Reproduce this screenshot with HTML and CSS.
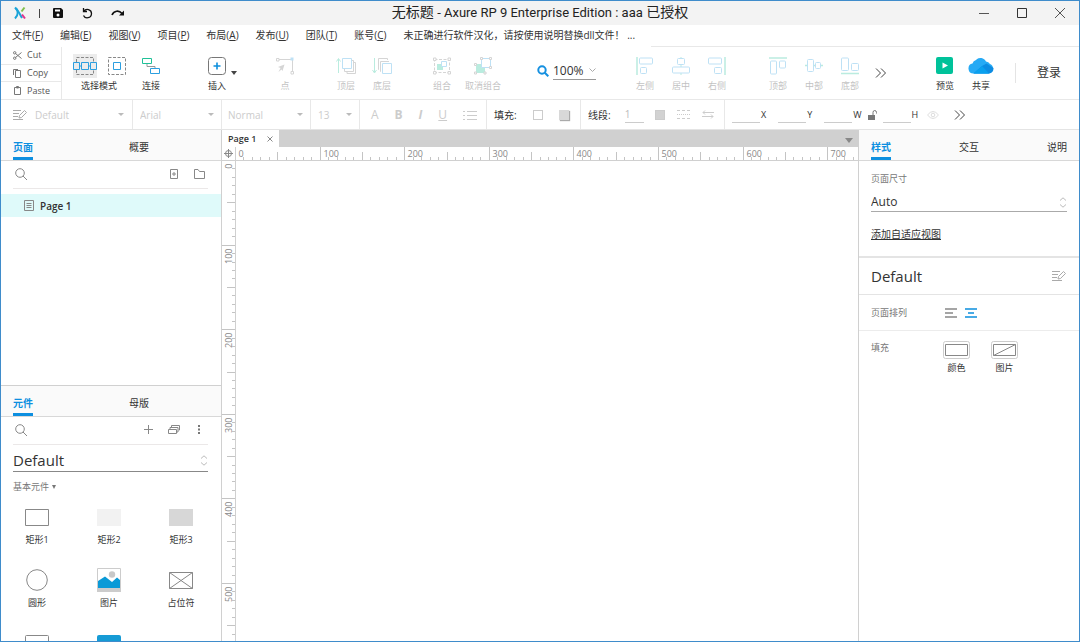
FILE: index.html
```html
<!DOCTYPE html>
<html lang="zh-CN">
<head>
<meta charset="utf-8">
<title>无标题 - Axure RP 9 Enterprise Edition</title>
<link rel="stylesheet" href="styles.css">
</head>
<body>
<div class="app">
  <header class="titlebar">
    <div class="quick">
      <svg class="logo" width="14" height="14" viewBox="0 0 14 14" fill="none" stroke-width="2"><path d="M2 1.500C5.500 5 5.500 9 2 12.500" stroke="#1ba4d8"/><path d="M3 2C6.500 7 7.500 9 9 12" stroke="#1ba4d8"/><path d="M8.500 5.500L11.500 1.500" stroke="#7fbf4b"/><path d="M9 8.500L12 12.500" stroke="#e0318c"/></svg>
      <span class="quick-line"></span>
      <button class="icon-btn" aria-label="保存"><svg width="10" height="10" viewBox="0 0 10 10"><path d="M1 0H8L10 2V9Q10 10 9 10H1Q0 10 0 9V1Q0 0 1 0Z" fill="#111"/><path d="M2 1.500H7V3.500H2Z" fill="#fff"/><circle cx="5" cy="7" r="1.500" fill="#fff"/></svg></button>
      <button class="icon-btn" aria-label="撤销"><svg width="12" height="12" viewBox="0 0 12 12" fill="none" stroke="#111" stroke-width="1.300"><path d="M2.500 1V4.500H6M2.700 4.300C5 1 10.500 2.300 10.500 6.500C10.500 11.500 4 12 2.500 8.500"/></svg></button>
      <button class="icon-btn" aria-label="重做"><svg width="14" height="12" viewBox="0 0 14 12"><path d="M1 8C3 3.500 8 3 11 6.500" fill="none" stroke="#111" stroke-width="1.700"/><path d="M13 3.500V8.500H8Z" fill="#111"/></svg></button>
    </div>
    <h1 class="title">无标题 <span class="product">- Axure RP 9 Enterprise Edition : aaa</span> 已授权</h1>
    <div class="window-btns">
      <button class="icon-btn" aria-label="最小化"><svg width="10" height="10"><path d="M0 5.500H10" stroke="#555"/></svg></button>
      <button class="icon-btn" aria-label="最大化"><svg width="10" height="10"><path d="M.5.500H9.500V9.500H.5Z" fill="none" stroke="#333"/></svg></button>
      <button class="icon-btn" aria-label="关闭"><svg width="10" height="10"><path d="M0 0L10 10M10 0L0 10" stroke="#555"/></svg></button>
    </div>
  </header>

  <nav class="menubar">
    <div class="menus">
      <button>文件(<u>F</u>)</button><button>编辑(<u>E</u>)</button><button>视图(<u>V</u>)</button><button>项目(<u>P</u>)</button><button>布局(<u>A</u>)</button><button>发布(<u>U</u>)</button><button>团队(<u>T</u>)</button><button>账号(<u>C</u>)</button><button>未正确进行软件汉化，请按使用说明替换dll文件！ ...</button>
    </div>
    <div class="menu-rest"></div>
  </nav>

  <div class="toolbar">
    <div class="clipboard">
      <button><svg width="9" height="9" viewBox="0 0 9 9" fill="none" stroke="#777"><path d="M2.500 2.500L8.500 7.500M2.500 6.500L8.500 1.500"/><circle cx="1.700" cy="1.800" r="1.200"/><circle cx="1.700" cy="7.200" r="1.200"/></svg>Cut</button>
      <button><svg width="9" height="9" viewBox="0 0 9 9" fill="none" stroke="#777"><path d="M2.500 1.500H7.500V8.500H2.500ZM.5 6V.5H5"/></svg>Copy</button>
      <button><svg width="9" height="9" viewBox="0 0 9 9" fill="none" stroke="#777"><path d="M1.500 1.500H7.500V8.500H1.500ZM3.500.500H5.500V2H3.500Z"/></svg>Paste</button>
    </div>
    <div class="tool select-mode">
      <div class="mode-icons">
        <button class="mode active" aria-label="相交选择"><svg width="24" height="24" viewBox="0 0 24 24" fill="none"><path d="M3.500 8V3.500H20.500V8M3.500 16V20.500H20.500V16" stroke="#888" stroke-dasharray="3 1.500"/><path d="M.5 8.500H6.500V15.500H.5ZM8.500 8.500H15.500V15.500H8.500ZM17.500 8.500H23.500V15.500H17.500ZM6.500 12H8.500M15.500 12H17.500" stroke="#2c9fe0"/></svg></button>
        <button class="mode" aria-label="包含选择"><svg width="18" height="24" viewBox="0 0 18 24" fill="none"><path d="M.5 3.500H17.500V20.500H.5Z" stroke="#888" stroke-dasharray="3 1.500"/><path d="M5.500 8.500H12.500V15.500H5.500Z" stroke="#2c9fe0"/></svg></button>
      </div>
      <span>选择模式</span>
    </div>
    <button class="tool connect"><svg width="18" height="24" viewBox="0 0 18 24" fill="none"><path d="M.5 4.500H9.500V9.500H.5Z" stroke="#1fc198"/><path d="M8.500 14.500H17.500V19.500H8.500Z" stroke="#2c9fe0"/><path d="M5 10V12.500H13V14" stroke="#999"/></svg><span>连接</span></button>
    <button class="tool insert"><svg width="18" height="24" viewBox="0 0 18 24" fill="none"><rect x=".5" y="3.500" width="17" height="17" rx="3" stroke="#777"/><path d="M5.500 12H12.500M9 8.500V15.500" stroke="#0d8fdd" stroke-width="1.600"/></svg><span>插入</span></button>
    <button class="caret-btn" aria-label="插入更多"><svg width="6" height="4"><path d="M0 0H6L3 4Z" fill="#444"/></svg></button>
    <button class="tool point off"><svg width="18" height="24" viewBox="0 0 18 24" fill="none"><path d="M3 5.500H16.500V17" stroke="#777"/><path d="M.5 4.500H3V7H.5ZM15 17.500H17.500V20H15Z" stroke="#777"/><path d="M14.500 3.500H17.500V6.500H14.500Z" fill="#2c9fe0"/><path d="M8.500 10.500L2 13L4.500 14L2.500 18L5.500 15.500L6.500 17Z" fill="#777"/></svg><span>点</span></button>
    <button class="tool front off"><svg width="20" height="24" viewBox="0 0 20 24" fill="none"><path d="M2.500 19V5M.5 7.500L2.500 4.500L4.500 7.500" stroke="#1fc198"/><path d="M16 6.500H17.500V17.500H8.500V15M18 8.500H19.500V19.500H11V18" stroke="#777"/><path d="M6.500 4.500H15.500V14.500H6.500Z" stroke="#2c9fe0"/></svg><span>顶层</span></button>
    <button class="tool off"><svg width="20" height="24" viewBox="0 0 20 24" fill="none"><path d="M2.500 4V18.500M.5 16L2.500 19L4.500 16" stroke="#1fc198"/><path d="M7 15.500H6.500V4.500H15.500V6M9 17.500H8.500V7.500H17" stroke="#777"/><path d="M10.500 9.500H19.500V19.500H10.500Z" stroke="#2c9fe0"/></svg><span>底层</span></button>
    <button class="tool group off"><svg width="18" height="24" viewBox="0 0 18 24" fill="none"><path d="M1.500 5.500H16.500V18.500H1.500Z" stroke="#777" stroke-dasharray="3 1.500"/><path d="M.5 4H3V6.500H.5ZM15 4H17.500V6.500H15ZM.5 17.500H3V20H.5ZM15 17.500H17.500V20H15Z" stroke="#777" fill="#fff"/><path d="M4 10H10V16H4Z" fill="#1fc198"/><path d="M8.500 7.500H13.500V12.500H8.500Z" stroke="#2c9fe0" fill="#fff"/></svg><span>组合</span></button>
    <button class="tool ungroup off"><svg width="18" height="24" viewBox="0 0 18 24" fill="none"><path d="M2 10H11V19H2Z" fill="#1fc198"/><path d="M7.500 4.500H16.500V13.500H7.500Z" stroke="#2c9fe0" fill="#fff"/><path d="M6.500 3.500H8.500V5.500H6.500ZM15.500 3.500H17.500V5.500H15.500ZM15.500 12.500H17.500V14.500H15.500ZM.5 9.500H2.500V11.500H.5ZM.5 18H2.500V20H.5ZM10 18H12V20H10Z" stroke="#777" fill="#fff"/></svg><span>取消组合</span></button>
    <div class="zoom">
      <svg width="12" height="12" viewBox="0 0 12 12" fill="none" stroke="#1590e0" stroke-width="2"><circle cx="5" cy="5" r="3.700"/><path d="M7.800 7.800L11.300 11.300"/></svg>
      <div class="zoom-field"><input value="100%" aria-label="缩放"><svg width="7" height="5" fill="none" stroke="#aaa"><path d="M.5.500L3.500 3.500L6.500.500"/></svg></div>
    </div>
    <button class="tool align-l off"><svg width="18" height="24" viewBox="0 0 18 24" fill="none"><path d="M1 3V21" stroke="#1fc198" stroke-width="1.500"/><rect x="3.500" y="4" width="13" height="6" rx="1" stroke="#2c9fe0"/><rect x="4.500" y="13.500" width="6" height="6" rx="1" stroke="#2c9fe0"/></svg><span>左侧</span></button>
    <button class="tool off"><svg width="18" height="24" viewBox="0 0 18 24" fill="none"><path d="M9 3V5M9 10V13M9 19V21" stroke="#1fc198"/><rect x="5.500" y="4.500" width="7" height="6" rx="1" stroke="#2c9fe0"/><rect x=".5" y="13" width="17" height="6" rx="1" stroke="#2c9fe0"/></svg><span>居中</span></button>
    <button class="tool off"><svg width="18" height="24" viewBox="0 0 18 24" fill="none"><path d="M17 3V21" stroke="#1fc198" stroke-width="1.500"/><rect x=".5" y="4" width="13" height="6" rx="1" stroke="#2c9fe0"/><rect x="6.500" y="13.500" width="7" height="6" rx="1" stroke="#2c9fe0"/></svg><span>右侧</span></button>
    <button class="tool front off"><svg width="18" height="24" viewBox="0 0 18 24" fill="none"><path d="M0 4H18" stroke="#1fc198" stroke-width="1.500"/><rect x="1.500" y="7" width="6" height="13" rx="1" stroke="#2c9fe0"/><rect x="10.500" y="7" width="6" height="7" rx="1" stroke="#2c9fe0"/></svg><span>顶部</span></button>
    <button class="tool off"><svg width="18" height="24" viewBox="0 0 18 24" fill="none"><path d="M0 11.500H2M9 11.500H10M16 11.500H18" stroke="#1fc198" stroke-width="1.500"/><rect x="2.500" y="5.500" width="6" height="12" rx="1" stroke="#2c9fe0"/><rect x="10.500" y="8.500" width="5" height="6" rx="1" stroke="#2c9fe0"/></svg><span>中部</span></button>
    <button class="tool off"><svg width="18" height="24" viewBox="0 0 18 24" fill="none"><path d="M0 19.500H18" stroke="#1fc198" stroke-width="1.500"/><rect x=".5" y="4" width="7" height="12.500" rx="1" stroke="#2c9fe0"/><rect x="10.500" y="9.500" width="7" height="7" rx="1" stroke="#2c9fe0"/></svg><span>底部</span></button>
    <button class="more" aria-label="更多工具"><svg width="11" height="10" fill="none" stroke="#444"><path d="M1 .5L5.500 5L1 9.500M6 .5L10.500 5L6 9.500"/></svg></button>
    <button class="tool preview"><svg width="18" height="24" viewBox="0 0 18 24"><rect x="0" y="3" width="17" height="17" rx="2" fill="#00c29a"/><path d="M6.500 8.500L12 11.500L6.500 14.500Z" fill="#fff"/></svg><span>预览</span></button>
    <button class="tool"><svg width="26" height="24" viewBox="0 0 26 24"><path d="M5.500 19.500A5 5 0 0 1 4.500 9.600A5 5 0 0 1 8 6A6 6 0 0 1 18 7.500A6 6 0 0 1 22 10A5 5 0 0 1 21 19.500Z" fill="#26aaf5"/><path d="M5.500 19.500L14 12L18.500 9.500L25.500 14A5 5 0 0 1 21 19.500Z" fill="#0d8ce2"/><path d="M14 12L21 19.500H5.500Z" fill="#0aa0ee"/></svg><span>共享</span></button>
    <span class="divider"></span>
    <button class="login">登录</button>
  </div>

  <div class="formatbar">
    <div class="cell style-cell off-text"><svg width="14" height="12" viewBox="0 0 14 12" fill="none" stroke="#aaa"><path d="M0 1.500H8M0 4.500H6M0 7.500H5M0 10.500H10M6 9L6.500 6.500L11.500 1.500L13.500 3.500L8.500 8.500Z"/></svg><select aria-label="样式"><option>Default</option></select><svg class="tri" width="6" height="3"><path d="M0 0H6L3 3Z"/></svg></div>
    <div class="cell font-cell off-text"><select aria-label="字体"><option>Arial</option></select><svg class="tri" width="6" height="3"><path d="M0 0H6L3 3Z"/></svg></div>
    <div class="cell weight-cell off-text"><select aria-label="字重"><option>Normal</option></select><svg class="tri" width="6" height="3"><path d="M0 0H6L3 3Z"/></svg></div>
    <div class="cell size-cell off-text"><select aria-label="字号"><option>13</option></select><svg class="tri" width="6" height="3"><path d="M0 0H6L3 3Z"/></svg></div>
    <div class="cell text-cell off-text">
      <button>A</button><button><b>B</b></button><button><b><i>I</i></b></button><button><u>U</u></button><button aria-label="列表"><svg width="14" height="10" stroke="#ccc"><path d="M0 1.500H2M4 1.500H14M0 5.500H2M4 5.500H14M0 9.500H2M4 9.500H14"/></svg></button>
    </div>
    <div class="cell fill-cell"><span class="lbl">填充:</span><button class="swatch" aria-label="填充颜色"></button><button class="swatch shadow" aria-label="阴影"></button></div>
    <div class="cell line-cell"><span class="lbl">线段:</span><input value="1" aria-label="线宽"><button class="swatch solid" aria-label="线条颜色"></button><button aria-label="线型"><svg width="13" height="9" stroke="#ccc"><path d="M0 .5H13" stroke-dasharray="3 2"/><path d="M0 4.500H13" stroke-dasharray="1 1"/><path d="M0 8.500H13" stroke-dasharray="3 2"/></svg></button><button aria-label="箭头"><svg width="12" height="9" fill="none" stroke="#ccc"><path d="M12 2.500H1L3 .5M1 2.500L3 4.500M0 6.500H11L9 4.500M11 6.500L9 8.500"/></svg></button></div>
    <div class="cell pos-cell">
      <label><input>X</label><label><input>Y</label><label><input>W</label>
      <button class="lock" aria-label="锁定比例"><svg width="9" height="10" viewBox="0 0 9 10"><path d="M0 5H7V10H0Z" fill="#777"/><path d="M5 5V2.500Q5 .5 6.700.500T8.500 2.500V3.500" fill="none" stroke="#777"/></svg></button>
      <label><input>H</label>
      <button class="eye" aria-label="可见"><svg width="12" height="8" fill="none" stroke="#ddd"><path d="M.5 4Q6-3 11.500 4Q6 11 .5 4Z"/><circle cx="6" cy="4" r="1.800"/></svg></button>
      <button class="more2" aria-label="更多格式"><svg width="11" height="10" fill="none" stroke="#444"><path d="M1 .5L5.500 5L1 9.500M6 .5L10.500 5L6 9.500"/></svg></button>
    </div>
  </div>

  <main class="main">
    <aside class="left">
      <section class="panel">
        <div class="tabs"><button class="on">页面</button><button>概要</button></div>
        <div class="search"><svg width="12" height="12" fill="none" stroke="#888"><circle cx="5" cy="5" r="4.300"/><path d="M8 8L12 12"/></svg><input aria-label="搜索页面">
          <button aria-label="添加页面"><svg width="8" height="10" fill="none" stroke="#888"><path d="M.5.500H7.500V9.500H.5ZM2 5H6M4 3V7"/></svg></button>
          <button class="folder" aria-label="添加文件夹"><svg width="11" height="10" fill="none" stroke="#888"><path d="M.5.500H4L5.500 2.500H10.500V9.500H.5Z"/></svg></button>
        </div>
        <a class="page" href="#page1"><svg width="10" height="11" fill="none" stroke="#888"><path d="M.5.500H9.500V10.500H.5ZM2.500 3.500H7.500M2.500 5.500H7.500M2.500 7.500H7.500"/></svg>Page 1</a>
      </section>
      <section class="panel library">
        <div class="tabs"><button class="on">元件</button><button>母版</button></div>
        <div class="search"><svg width="12" height="12" fill="none" stroke="#888"><circle cx="5" cy="5" r="4.300"/><path d="M8 8L12 12"/></svg><input aria-label="搜索元件">
          <button aria-label="添加"><svg width="9" height="9" stroke="#888"><path d="M0 4.500H9M4.500 0V9"/></svg></button>
          <button class="stack" aria-label="元件库"><svg width="12" height="9" fill="none" stroke="#888"><path d="M.5 4.500H8.500V8.500H.5ZM2 4V2.500H10V7H9M3.500 2V.5H11.500V5H10.500"/></svg></button>
          <button class="dots" aria-label="选项"><svg width="3" height="9" fill="#777"><path d="M0 0H2V2H0ZM0 3.500H2V5.500H0ZM0 7H2V9H0Z"/></svg></button>
        </div>
        <div class="pick"><select aria-label="元件库选择"><option>Default</option></select><svg width="8" height="11" fill="none" stroke="#bbb"><path d="M1 3.500L4 .8L7 3.500M1 7.500L4 10.200L7 7.500"/></svg></div>
        <button class="category">基本元件 <svg width="4" height="4"><path d="M0 0H4L2 4Z" fill="#777"/></svg></button>
        <div class="widgets">
          <button><svg width="26" height="26" fill="none" stroke="#888"><path d="M1.500 5.500H24.500V21.500H1.500Z"/></svg>矩形1</button>
          <button><svg width="26" height="26"><path d="M1 5H25V22H1Z" fill="#f2f2f2"/></svg>矩形2</button>
          <button><svg width="26" height="26"><path d="M1 5H25V22H1Z" fill="#d7d7d7"/></svg>矩形3</button>
          <button><svg width="26" height="26" fill="none" stroke="#888"><circle cx="13" cy="13" r="10.300"/></svg>圆形</button>
          <button><svg width="26" height="26"><path d="M1.500 1.500H24.500V24.500H1.500Z" fill="#fff" stroke="#ccc"/><circle cx="16" cy="7.500" r="3.200" fill="#c8c8c8"/><path d="M2 14L9 9.500L16 15L21 10.500L24 13V21H2Z" fill="#0a9ad7"/><path d="M1 21H25V25H1Z" fill="#ccc"/></svg>图片</button>
          <button><svg width="26" height="26" fill="none" stroke="#888"><path d="M1.500 5.500H24.500V21.500H1.500ZM1.500 5.500L24.500 21.500M24.500 5.500L1.500 21.500"/></svg>占位符</button>
          <button aria-label="按钮"><svg width="26" height="26" fill="none" stroke="#888"><rect x="1.500" y="5.500" width="23" height="16" rx="1"/></svg></button>
          <button aria-label="主要按钮"><svg width="26" height="26"><rect x="1" y="5" width="24" height="17" rx="2" fill="#169bd5"/></svg></button>
        </div>
      </section>
    </aside>

    <section class="center">
      <div class="doc-tabs"><div class="doc-tab"><span>Page 1</span><button aria-label="关闭页面"><svg width="6" height="6" stroke="#888"><path d="M.5.500L5.500 5.500M5.500.500L.5 5.500"/></svg></button></div><button class="doc-menu" aria-label="页面列表"><svg width="8" height="5"><path d="M0 0H8L4 5Z" fill="#888"/></svg></button></div>
      <div class="rulers">
        <div class="corner"><svg width="9" height="9" fill="none" stroke="#888"><circle cx="4.500" cy="4.500" r="3"/><path d="M0 4.500H9M4.500 0V9"/></svg></div>
        <svg class="ruler-h" id="ruler-h"></svg>
        <svg class="ruler-v" id="ruler-v"></svg>
        <div class="canvas"></div>
      </div>
    </section>

    <aside class="right">
      <div class="tabs"><button class="on">样式</button><button>交互</button><button>说明</button></div>
      <section class="size">
        <label for="page-size">页面尺寸</label>
        <div class="pick"><select id="page-size"><option>Auto</option></select><svg width="8" height="11" fill="none" stroke="#bbb"><path d="M1 3.500L4 .8L7 3.500M1 7.500L4 10.200L7 7.500"/></svg></div>
        <a href="#views">添加自适应视图</a>
      </section>
      <section class="style-name"><h2>Default</h2><button aria-label="编辑样式"><svg width="14" height="12" viewBox="0 0 14 12" fill="none" stroke="#aaa"><path d="M0 1.500H8M0 4.500H6M0 7.500H5M0 10.500H10M6 9L6.500 6.500L11.500 1.500L13.500 3.500L8.500 8.500Z"/></svg></button></section>
      <section class="prop arrange"><span class="name">页面排列</span><button aria-label="左对齐"><svg width="12" height="10" stroke="#888" stroke-width="1.300"><path d="M0 1H12M0 5H8M0 9H12"/></svg></button><button aria-label="居中对齐"><svg width="12" height="10" stroke="#0d8fdd" stroke-width="1.600"><path d="M0 1H12M3 5H9M0 9H12"/></svg></button></section>
      <section class="prop fills"><span class="name">填充</span>
        <button><svg width="27" height="18" fill="none"><rect x=".5" y=".5" width="26" height="17" rx="2" stroke="#ccc"/><path d="M2.500 3.500H24.500V14.500H2.500Z" stroke="#888"/></svg>颜色</button>
        <button><svg width="27" height="18" fill="none"><rect x=".5" y=".5" width="26" height="17" rx="2" stroke="#ccc"/><path d="M2.500 3.500H24.500V14.500H2.500ZM2.500 14.500L24.500 3.500" stroke="#888"/></svg>图片</button>
      </section>
    </aside>
  </main>
</div>
<script src="rulers.js"></script>
</body>
</html>
```

FILE: styles.css
```css
* { box-sizing: border-box; }
body { margin: 0; font-family: "Open Sans", "Noto Sans CJK SC", sans-serif; font-size: 10px; line-height: 14px; color: #333; }
button, input, select { font: inherit; color: inherit; background: none; border: 0; padding: 0; margin: 0; border-radius: 0; outline: 0; }
select { appearance: none; min-width: 0; }
input { min-width: 0; }
svg { display: block; flex: none; }
h1, h2 { margin: 0; font-weight: 400; }
u { text-underline-offset: 1px; }

.app { height: 100vh; display: flex; flex-direction: column; border: 1px solid #3f8ccb; background: #fff; overflow: hidden; }

.titlebar { flex: none; height: 24px; display: grid; grid-template-columns: 1fr auto 1fr; align-items: center; background: #f3f3f3; }
.quick { display: flex; align-items: center; padding-left: 12px; }
.quick-line { width: 1px; height: 9px; background: #444; margin: 0 13px 0 12px; }
.quick .icon-btn { margin-right: 18px; }
.title { font-family: Roboto, "Noto Sans CJK SC", sans-serif; font-size: 14px; line-height: 20px; padding-bottom: 2px; color: #222; }
.product { font-size: 13px; }
.window-btns { display: flex; justify-content: flex-end; gap: 28px; padding-right: 14px; }

.menubar { flex: none; height: 22px; display: flex; }
.menus { display: flex; align-items: center; gap: 17px; padding: 0 0 2px 11px; white-space: nowrap; }
.menu-rest { flex: 1; margin-left: 16px; border-bottom: 1px solid #e8e8e8; }

.toolbar { flex: none; height: 53px; display: flex; align-items: center; border-bottom: 1px solid #e8e8e8; font-size: 9px; }
.clipboard { width: 61px; height: 52px; display: flex; flex-direction: column; border-right: 1px solid #e8e8e8; }
.clipboard button { flex: 1; display: flex; align-items: center; gap: 5px; padding-left: 12px; font-size: 9px; color: #555; }
.clipboard button + button { border-top: 1px solid #e8e8e8; }
.tool { width: 36px; display: flex; flex-direction: column; align-items: center; line-height: 12px; white-space: nowrap; gap: 2px; }
.off { opacity: .3; }
.select-mode { width: 54px; margin-left: 10px; }
.mode-icons { display: flex; gap: 11px; }
.mode.active { background: #ececec; }
.connect { margin-left: 7px; }
.insert { width: 28px; margin-left: 34px; }
.point { margin-left: 30px; }
.front { margin-left: 25px; }
.group { margin-left: 24px; }
.ungroup { width: 40px; margin-left: 3px; }
.zoom { display: flex; align-items: center; gap: 4px; margin-left: 34px; padding-bottom: 5px; }
.zoom-field { width: 43px; display: flex; align-items: center; border-bottom: 1px solid #999; }
.zoom-field input { width: 36px; height: 18px; font-size: 12px; }
.align-l { margin-left: 31px; }
.more { margin-left: 7px; }
.preview { margin-left: auto; }
.divider { width: 1px; height: 20px; margin-left: 16px; background: #e4e4e4; }
.login { margin: 0 18px 0 21px; font-size: 12px; line-height: 18px; }

.formatbar { flex: none; height: 30px; display: flex; border-bottom: 1px solid #e4e4e4; }
.cell { display: flex; align-items: center; flex: none; border-right: 1px solid #e8e8e8; }
.cell:last-child { border: 0; flex: 1; }
.cell select { flex: 1; }
.off-text { color: #ccc; }
.tri { fill: #bbb; }
.style-cell { width: 132px; padding: 0 8px 0 12px; gap: 8px; }
.font-cell { width: 89px; padding: 0 7px; }
.weight-cell { width: 89px; padding: 0 7px 0 6px; }
.size-cell { width: 49px; padding: 0 7px; }
.text-cell { width: 127px; padding: 0 9px 0 11px; justify-content: space-between; font-size: 12px; }
.fill-cell { width: 94px; padding-left: 7px; }
.line-cell { width: 144px; padding-left: 7px; }
.swatch { width: 10px; height: 10px; border: 1px solid #ccc; }
.fill-cell .swatch { margin-left: 16px; }
.swatch.shadow { background: #d8d8d8; border-color: #d8d8d8; box-shadow: 1px 1px 1px #aaa; }
.swatch.solid { background: #d2d2d2; }
.line-cell input { width: 19px; height: 16px; color: #bbb; border-bottom: 1px solid #ccc; margin: 0 11px 0 14px; }
.line-cell button + button { margin-left: 12px; }
.pos-cell { padding-left: 7px; font-size: 9px; }
.pos-cell label { display: flex; align-items: center; gap: 1px; margin-right: 12px; }
.pos-cell input { width: 28px; height: 16px; border-bottom: 1px solid #ccc; }
.pos-cell label:nth-child(3) { margin-right: 6px; }
.lock { margin-right: 6px; }
.eye { margin: 0 15px 0 -3px; }

.main { flex: 1; min-height: 0; display: grid; grid-template-columns: 221px minmax(0, 1fr) 221px; }
.left { display: flex; flex-direction: column; min-height: 0; border-right: 1px solid #d0d0d0; }
.panel { flex: 1 1 0; min-height: 0; overflow: hidden; }
.library { border-top: 1px solid #d0d0d0; }
.tabs { height: 31px; display: flex; background: #fafafa; border-bottom: 1px solid #d8d8d8; padding: 0 12px; }
.left .tabs { gap: 96px; }
.tabs button { padding-top: 6px; border-bottom: 3px solid transparent; font-size: 10px; }
.tabs .on { font-weight: 700; color: #0d8fe0; border-color: #0d8fe0; }
.search { height: 28px; margin: 0 13px 0 12px; padding: 0 3px 2px 2px; display: flex; align-items: center; border-bottom: 1px solid #ebe8e8; }
.search input { flex: 1; }
.folder { margin-left: 16px; }
.stack { margin-left: 15px; }
.dots { margin: 0 4px 0 18px; }
.page { display: flex; align-items: center; gap: 6px; height: 23px; margin-top: 5px; padding-left: 23px; background: #dffafa; color: #333; font-weight: 600; text-decoration: none; }
.pick { display: flex; align-items: center; border-bottom: 1px solid #888; }
.pick select { flex: 1; }
.library .pick { height: 27px; margin: 0 13px 0 12px; padding-top: 4px; font-size: 15px; line-height: 20px; }
.category { display: flex; align-items: center; gap: 3px; margin: 8px 12px 0; font-size: 9px; color: #777; }
.widgets { display: grid; grid-template-columns: repeat(3, 1fr); row-gap: 17px; margin: 10px 4px 0 0; font-size: 9px; }
.widgets button { height: 46px; display: flex; flex-direction: column; align-items: center; gap: 3px; }

.center { display: flex; flex-direction: column; min-height: 0; }
.doc-tabs { height: 17px; display: flex; justify-content: space-between; background: #d0d0d0; }
.doc-tab { width: 57px; display: flex; align-items: center; justify-content: space-between; padding: 0 6px; background: #fff; font-size: 9px; font-weight: 600; }
.doc-menu { padding: 4px 5px 0; }
.rulers { flex: 1; min-height: 0; display: grid; grid-template: 14px minmax(0, 1fr) / 14px minmax(0, 1fr); }
.corner { display: flex; align-items: center; justify-content: center; border: solid #d0d0d0; border-width: 0 1px 1px 0; }
.ruler-h { width: 100%; height: 14px; border-bottom: 1px solid #d0d0d0; }
.ruler-v { width: 14px; height: 100%; border-right: 1px solid #d0d0d0; }
.rulers text { font-size: 9px; fill: #888; }
.rulers path { stroke: #c4c4c4; fill: none; }
.rulers .corner path { stroke: #888; }

.right { border-left: 1px solid #d0d0d0; }
.right .tabs { justify-content: space-between; }
.size { padding: 11px 12px 15px; border-bottom: 2px solid #e4e4e4; }
.size label { display: block; font-size: 9px; color: #777; }
.size .pick { height: 26px; font-size: 12px; padding-top: 7px; border-color: #aaa; }
.size a { display: inline-block; margin-top: 15px; color: #333; text-underline-offset: 1px; }
.style-name { height: 37px; display: flex; align-items: center; justify-content: space-between; padding: 0 13px 0 12px; border-bottom: 1px solid #e4e4e4; }
.style-name h2 { font-size: 15px; line-height: 20px; }
.prop { display: flex; padding: 0 12px; font-size: 9px; }
.prop .name { width: 72px; color: #777; }
.arrange { height: 36px; align-items: center; gap: 8px; border-bottom: 1px solid #ececec; }
.arrange .name { width: 66px; }
.fills { padding-top: 10px; }
.fills button { display: flex; flex-direction: column; align-items: center; gap: 2px; margin-right: 21px; }
```

FILE: rulers.js
```js
(function () {
  const NS = 'http://www.w3.org/2000/svg';
  const STEP = 8.46;

  function add(parent, tag, attrs, text) {
    const node = document.createElementNS(NS, tag);
    for (const key in attrs) node.setAttribute(key, attrs[key]);
    if (text !== undefined) node.textContent = text;
    parent.appendChild(node);
  }

  function draw(svg, length, vertical) {
    svg.replaceChildren();
    for (let i = 0; i * STEP < length; i++) {
      const at = Math.round(i * STEP) - 0.5;
      const start = i % 10 === 0 ? 0 : i % 5 === 0 ? 5 : 10;
      if (i > 0) add(svg, 'path', { d: vertical ? `M${start} ${at}H14` : `M${at} ${start}V14` });
      if (i % 10 !== 0) continue;
      if (vertical) add(svg, 'text', { transform: `translate(10 ${at + 3}) rotate(-90)`, 'text-anchor': 'end' }, i * 10);
      else add(svg, 'text', { x: at + 3, y: 10 }, i * 10);
    }
  }

  function update() {
    const h = document.getElementById('ruler-h');
    const v = document.getElementById('ruler-v');
    draw(h, h.getBoundingClientRect().width, false);
    draw(v, v.getBoundingClientRect().height, true);
  }

  update();
  window.addEventListener('resize', update);
})();
```
